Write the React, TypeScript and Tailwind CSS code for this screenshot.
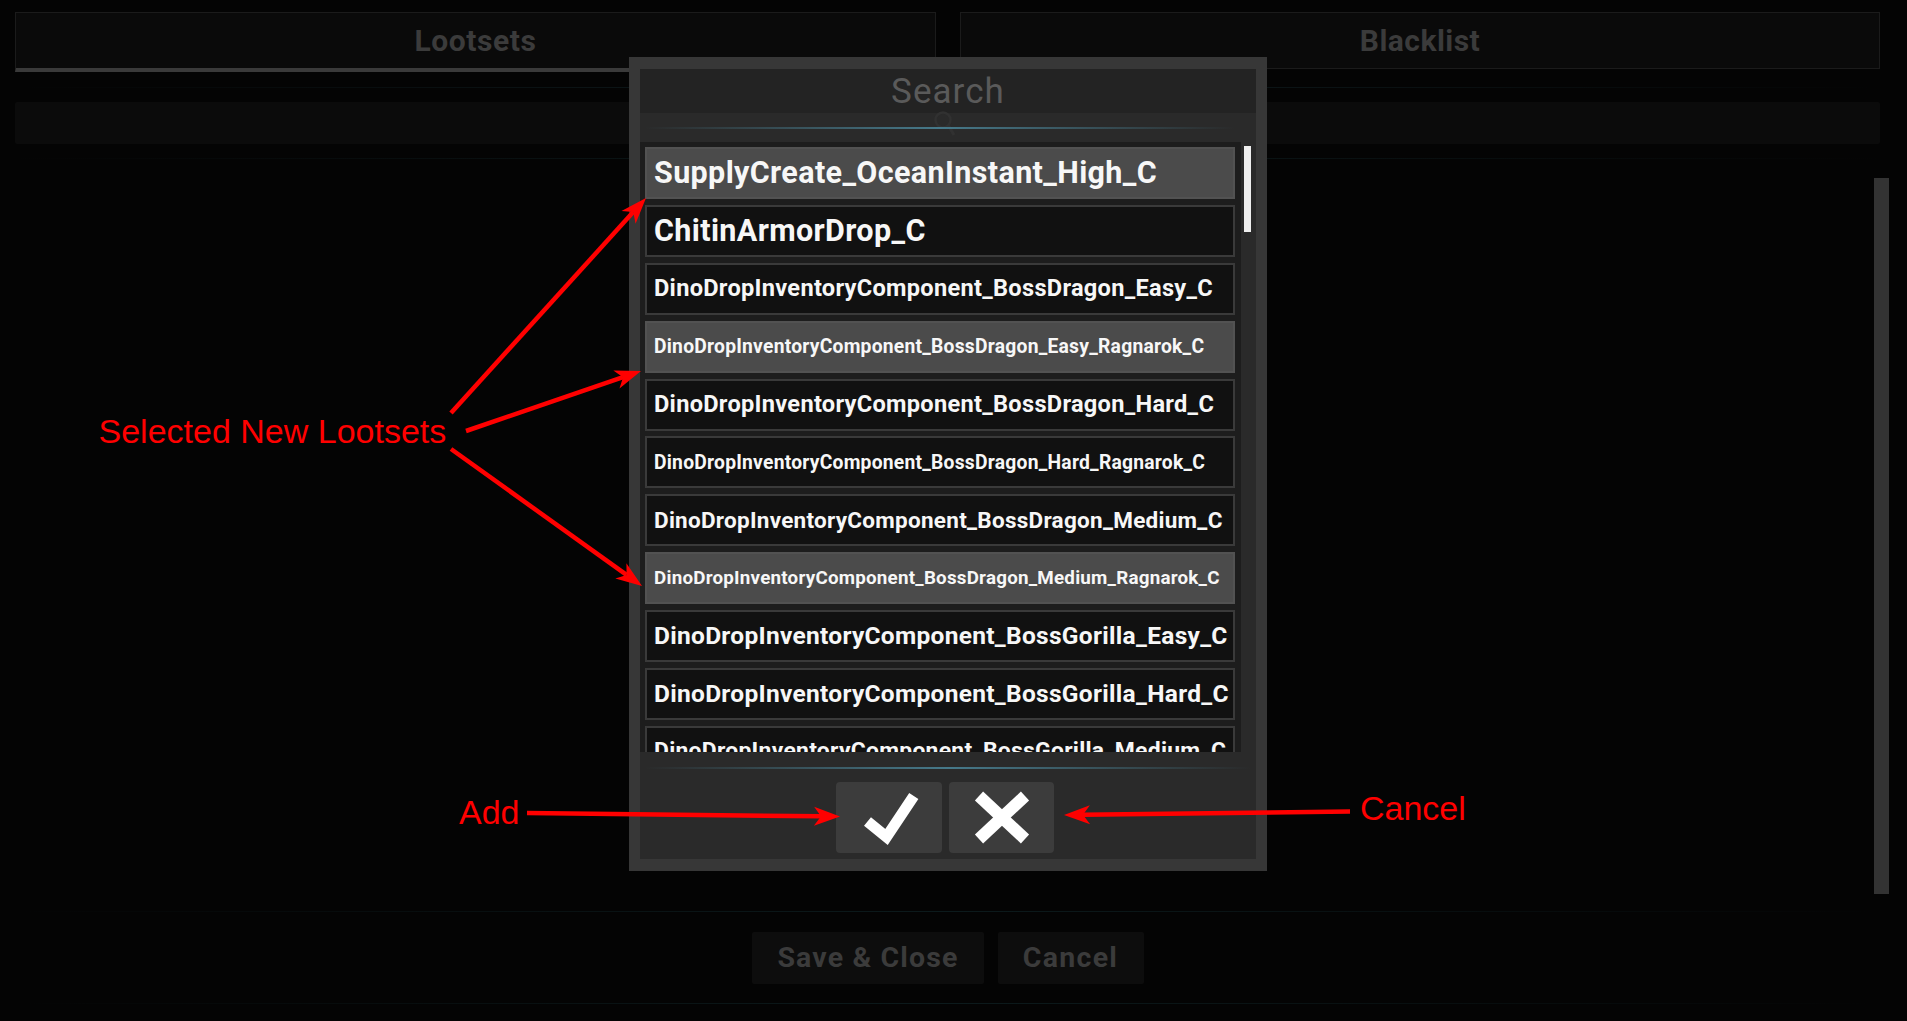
import React from "react";

type Row = { t: string; s: string; sel?: boolean };

const rows: Row[] = [
  { t: "SupplyCreate_OceanInstant_High_C", s: "text-[30.5px]", sel: true },
  { t: "ChitinArmorDrop_C", s: "text-[30.5px]" },
  { t: "DinoDropInventoryComponent_BossDragon_Easy_C", s: "text-[23.6px]" },
  { t: "DinoDropInventoryComponent_BossDragon_Easy_Ragnarok_C", s: "text-[19.3px]", sel: true },
  { t: "DinoDropInventoryComponent_BossDragon_Hard_C", s: "text-[23.6px]" },
  { t: "DinoDropInventoryComponent_BossDragon_Hard_Ragnarok_C", s: "text-[19.3px]" },
  { t: "DinoDropInventoryComponent_BossDragon_Medium_C", s: "text-[22.5px]" },
  { t: "DinoDropInventoryComponent_BossDragon_Medium_Ragnarok_C", s: "text-[18.8px]", sel: true },
  { t: "DinoDropInventoryComponent_BossGorilla_Easy_C", s: "text-[24.5px]" },
  { t: "DinoDropInventoryComponent_BossGorilla_Hard_C", s: "text-[24.5px]" },
  { t: "DinoDropInventoryComponent_BossGorilla_Medium_C", s: "text-[22.9px]" },
];

function Arrow({ x1, y1, x2, y2 }: { x1: number; y1: number; x2: number; y2: number }) {
  const L = 26;
  const W = 9.5;
  const N = 7;
  const dx = x2 - x1;
  const dy = y2 - y1;
  const len = Math.hypot(dx, dy);
  const ux = dx / len;
  const uy = dy / len;
  const nx = -uy;
  const ny = ux;
  const bx = x2 - ux * L;
  const by = y2 - uy * L;
  const cx = x2 - ux * (L - N);
  const cy = y2 - uy * (L - N);
  const pts = [
    [x2, y2],
    [bx + nx * W, by + ny * W],
    [cx, cy],
    [bx - nx * W, by - ny * W],
  ]
    .map((p) => p.join(","))
    .join(" ");
  return (
    <g>
      <line x1={x1} y1={y1} x2={cx} y2={cy} stroke="#ff0000" strokeWidth={4.5} />
      <polygon points={pts} fill="#ff0000" />
    </g>
  );
}

function Glow({ className }: { className: string }) {
  return <div className={`bg-linear-to-r from-transparent via-[#46798a] to-transparent ${className}`} />;
}

export default function App() {
  return (
    <div className="relative w-[1907px] h-[1021px] overflow-hidden bg-[#040404] font-['Roboto',sans-serif]">
      {/* background page */}
      <div className="flex flex-col pt-[12px] pl-[15px] pr-[27px]">
        <div className="flex items-start gap-[24px]">
          <div className="w-[921px] h-[60px] border border-[#1b1b1b] border-b-4 border-b-[#3a3a3a] bg-[#0a0a0a] flex items-center justify-center">
            <span className="text-[30px] font-bold leading-none tracking-[0.02em] text-[#3b3b3b]">Lootsets</span>
          </div>
          <div className="flex-1 h-[57px] border border-[#1b1b1b] bg-[#0a0a0a] flex items-center justify-center">
            <span className="text-[30px] font-bold leading-none tracking-[0.015em] text-[#3b3b3b]">Blacklist</span>
          </div>
        </div>
        <div className="mt-[15px] h-px bg-linear-to-r from-transparent via-[#0f1c1f] to-transparent" />
        <div className="mt-[14px] h-[42px] rounded-[2px] bg-[#0b0b0b]" />
        <div className="mt-[14px] h-px bg-linear-to-r from-transparent via-[#0d1a1c] to-transparent" />
        <div className="mt-[19px] h-[716px] flex justify-end -mr-[9px]">
          <div className="w-[15px] h-full bg-[#333333]" />
        </div>
        <div className="mt-[17px] h-px bg-linear-to-r from-transparent via-[#0c1a1c] to-transparent" />
        <div className="mt-[20px] flex gap-[13.5px] pl-[737px]">
          <div className="w-[232px] h-[52px] rounded-[2px] bg-[#0d0d0d] flex items-center justify-center">
            <span className="text-[28.5px] font-bold leading-none tracking-[0.04em] text-[#3b3b3b]">Save &amp; Close</span>
          </div>
          <div className="w-[146px] h-[52px] rounded-[2px] bg-[#0d0d0d] flex items-center justify-center">
            <span className="text-[28.5px] font-bold leading-none tracking-[0.045em] text-[#3b3b3b]">Cancel</span>
          </div>
        </div>
        <div className="mt-[19px] h-px bg-linear-to-r from-transparent via-[#0c1a1c] to-transparent" />
      </div>

      {/* modal */}
      <div className="absolute left-[629px] top-[57px] w-[638px] h-[814px] bg-[#373737] px-[11px] py-[12px] flex">
        <div className="flex-1 flex flex-col bg-[#2a2a2a]">
          <div className="h-[44px] bg-[#232323] flex items-center justify-center">
            <span className="text-[35px] leading-none tracking-[0.03em] text-[#5a5a5a]">Search</span>
          </div>
          <div className="relative h-[29px]">
            <svg className="absolute left-[292px] top-[-3px]" width="26" height="28" viewBox="0 0 26 28">
              <circle cx="11" cy="10" r="7.5" fill="none" stroke="#313131" strokeWidth="2.5" />
              <line x1="16.5" y1="15.5" x2="22" y2="25" stroke="#313131" strokeWidth="3" />
            </svg>
            <Glow className="absolute left-[5px] right-[21px] top-[14px] h-[2px]" />
          </div>
          <div className="h-[610px] flex">
            <div className="w-[601px] h-full overflow-hidden bg-[#1d1d1d] pt-[5px] pl-[5px] pr-[6px] flex flex-col gap-[5.9px]">
              {rows.map((r) => (
                <div
                  key={r.t}
                  className={`shrink-0 h-[52px] border-2 pl-[7px] flex items-center overflow-hidden ${
                    r.sel ? "bg-[#4b4b4b] border-[#525252]" : "bg-[#111111] border-[#3a3a3a]"
                  }`}
                >
                  <span className={`whitespace-nowrap font-bold leading-none tracking-[0.012em] text-[#f7f7f7] ${r.s}`}>
                    {r.t}
                  </span>
                </div>
              ))}
            </div>
            <div className="flex-1 pt-[4px] pl-[3px]">
              <div className="w-[7px] h-[86px] bg-[#efefef]" />
            </div>
          </div>
          <div className="flex-1 flex flex-col">
            <Glow className="mt-[15px] mx-[5px] h-[2px]" />
            <div className="mt-[13px] flex gap-[7px] pl-[195.5px]">
              <div className="w-[106px] h-[71px] rounded-[4px] bg-[#3c3c3c] flex items-center justify-center">
                <svg width="106" height="71" viewBox="0 0 106 71">
                  <polyline
                    points="31.5,39.5 50.5,55 77.8,14"
                    fill="none"
                    stroke="#ffffff"
                    strokeWidth="11"
                    strokeLinejoin="miter"
                    strokeLinecap="butt"
                  />
                </svg>
              </div>
              <div className="w-[105px] h-[71px] rounded-[4px] bg-[#3c3c3c] flex items-center justify-center">
                <svg width="105" height="71" viewBox="0 0 105 71">
                  <line x1="30" y1="14" x2="76" y2="57" stroke="#ffffff" strokeWidth="12" />
                  <line x1="76" y1="14" x2="30" y2="57" stroke="#ffffff" strokeWidth="12" />
                </svg>
              </div>
            </div>
          </div>
        </div>
      </div>

      {/* annotations */}
      <svg className="absolute inset-0 pointer-events-none" width="1907" height="1021" viewBox="0 0 1907 1021">
        <Arrow x1={451} y1={413} x2={646} y2={198} />
        <Arrow x1={466} y1={431} x2={641} y2={371} />
        <Arrow x1={451} y1={449} x2={642} y2={586} />
        <Arrow x1={527} y1={813} x2={840} y2={816.5} />
        <Arrow x1={1350} y1={811.5} x2={1064} y2={815} />
      </svg>
      <div className="absolute left-[98.5px] top-[413.5px] text-[34px] leading-none text-[#ff0000] font-['Liberation_Sans',Arial,sans-serif] whitespace-nowrap">
        Selected New Lootsets
      </div>
      <div className="absolute left-[459px] top-[795px] text-[34px] leading-none text-[#ff0000] font-['Liberation_Sans',Arial,sans-serif]">
        Add
      </div>
      <div className="absolute left-[1360px] top-[790.5px] text-[34px] leading-none text-[#ff0000] font-['Liberation_Sans',Arial,sans-serif]">
        Cancel
      </div>
    </div>
  );
}
